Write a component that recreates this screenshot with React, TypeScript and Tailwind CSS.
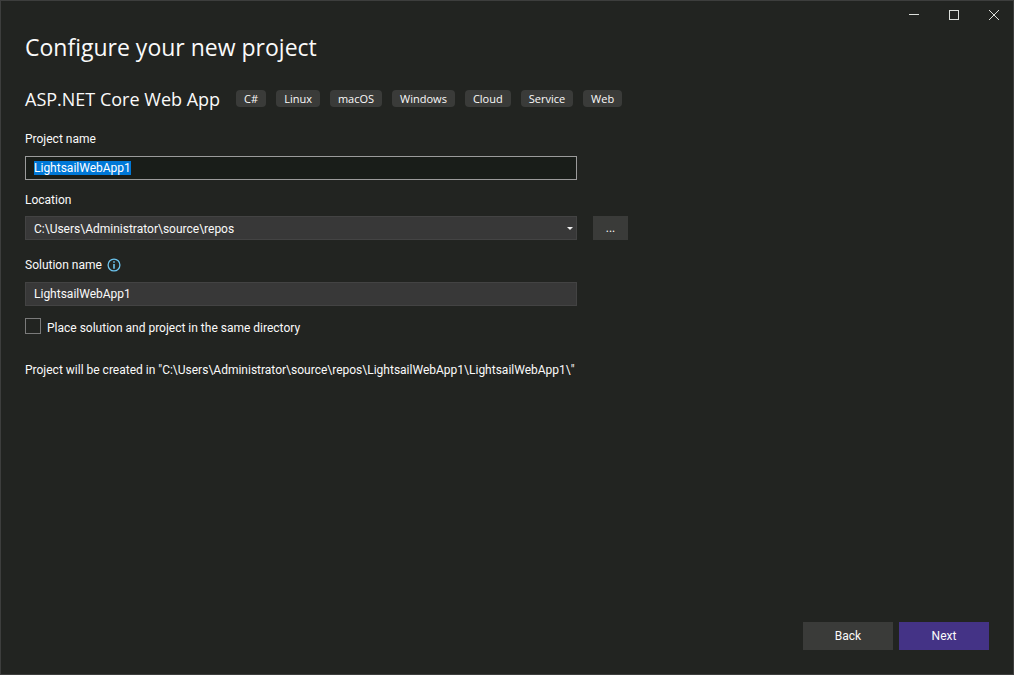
import { useEffect, useRef, useState } from "react";

const tags = ["C#", "Linux", "macOS", "Windows", "Cloud", "Service", "Web"];
const locations = ["C:\\Users\\Administrator\\source\\repos"];

function TitleBar() {
  const button = "flex h-[29px] w-10 items-center justify-center hover:bg-[#3d3e3c]";
  return (
    <header className="flex justify-end">
      <button type="button" aria-label="Minimize" className={button}>
        <svg width="10" height="10" viewBox="0 0 10 10" shapeRendering="crispEdges">
          <path d="M0 4.5h10" stroke="#dcdfdb" />
        </svg>
      </button>
      <button type="button" aria-label="Maximize" className={button}>
        <svg width="10" height="10" viewBox="0 0 10 10" shapeRendering="crispEdges">
          <path d="M.5.5h9v9h-9z" fill="none" stroke="#dcdfdb" />
        </svg>
      </button>
      <button type="button" aria-label="Close" className={button}>
        <svg width="10" height="10" viewBox="0 0 10 10">
          <path d="M0 0l10 10M10 0L0 10" stroke="#dcdfdb" />
        </svg>
      </button>
    </header>
  );
}

export default function App() {
  const [name, setName] = useState("LightsailWebApp1");
  const [solution, setSolution] = useState("LightsailWebApp1");
  const [location, setLocation] = useState(locations[0]);
  const nameRef = useRef<HTMLInputElement>(null);

  useEffect(() => {
    nameRef.current?.focus();
    nameRef.current?.select();
  }, []);

  return (
    <div className="flex min-h-screen flex-col bg-[#222421] font-['Open_Sans','Noto_Sans',sans-serif] text-[12px] leading-4 text-[#fafafa] inset-ring inset-ring-[#3d3e3d]">
      <TitleBar />
      <main className="flex grow flex-col px-[25px] pb-[25px]">
        <h1 className="text-[23px] leading-9">Configure your new project</h1>

        <div className="mt-4 flex items-center gap-4">
          <h2 className="text-[18px] leading-9 whitespace-nowrap">ASP.NET Core Web App</h2>
          <ul className="flex gap-2.5 pb-0.5 text-[11px]">
            {tags.map((tag) => (
              <li key={tag} className="rounded-sm bg-[#3a3b39] px-2 leading-[17px]">
                {tag}
              </li>
            ))}
          </ul>
        </div>

        <form className="flex grow flex-col font-[Roboto,'Open_Sans',sans-serif]" onSubmit={(e) => e.preventDefault()}>
          <div className="mt-3.5 flex max-w-[552px] flex-col gap-[9px]">
            <label htmlFor="project-name">Project name</label>
            <input
              id="project-name"
              ref={nameRef}
              value={name}
              onChange={(e) => setName(e.target.value)}
              className="h-6 border border-[#9b9b9b] bg-[#191d19] px-2 outline-none selection:bg-[#0078d7] selection:text-white"
            />
          </div>

          <div className="mt-3 flex flex-col gap-2">
            <label htmlFor="location">Location</label>
            <div className="flex gap-4">
              <div className="relative w-full max-w-[552px]">
                <select
                  id="location"
                  value={location}
                  onChange={(e) => setLocation(e.target.value)}
                  className="block h-6 w-full appearance-none border border-[#434343] bg-[#383838] px-2 pt-px outline-none"
                >
                  {locations.map((path) => (
                    <option key={path}>{path}</option>
                  ))}
                </select>
                <svg
                  className="pointer-events-none absolute top-[11px] right-1"
                  width="6"
                  height="3"
                  viewBox="0 0 6 3"
                >
                  <path d="M0 0h6L3 3z" fill="#f1f1f1" />
                </svg>
              </div>
              <button type="button" aria-label="Browse" className="h-6 w-[35px] shrink-0 bg-[#3a3b39]">
                ...
              </button>
            </div>
          </div>

          <div className="mt-[17px] flex max-w-[552px] flex-col gap-[9px]">
            <div className="flex items-center gap-[5px]">
              <label htmlFor="solution-name">Solution name</label>
              <svg width="14" height="14" viewBox="0 0 14 14" role="img" aria-label="Information">
                <circle cx="7" cy="7" r="5.9" fill="none" stroke="#6cc4ee" strokeWidth="1.3" />
                <path d="M6.2 3.2h1.6v1.6H6.2zM6.2 6h1.6v4.8H6.2z" fill="#6cc4ee" />
              </svg>
            </div>
            <input
              id="solution-name"
              value={solution}
              onChange={(e) => setSolution(e.target.value)}
              className="h-6 border border-[#434343] bg-[#383838] px-2 outline-none"
            />
          </div>

          <label className="mt-3 flex items-start gap-1.5 leading-5">
            <input
              type="checkbox"
              className="size-4 appearance-none border border-[#7a7a7a] bg-[#222421] checked:bg-[#443386]"
            />
            Place solution and project in the same directory
          </label>

          <p className="mt-6">
            Project will be created in "{location}\{solution}\{name}\"
          </p>

          <div className="mt-auto flex justify-end gap-1.5">
            <button type="button" className="h-7 w-[90px] bg-[#3a3b39]">
              Back
            </button>
            <button type="submit" className="h-7 w-[90px] bg-[#443386]">
              Next
            </button>
          </div>
        </form>
      </main>
    </div>
  );
}
